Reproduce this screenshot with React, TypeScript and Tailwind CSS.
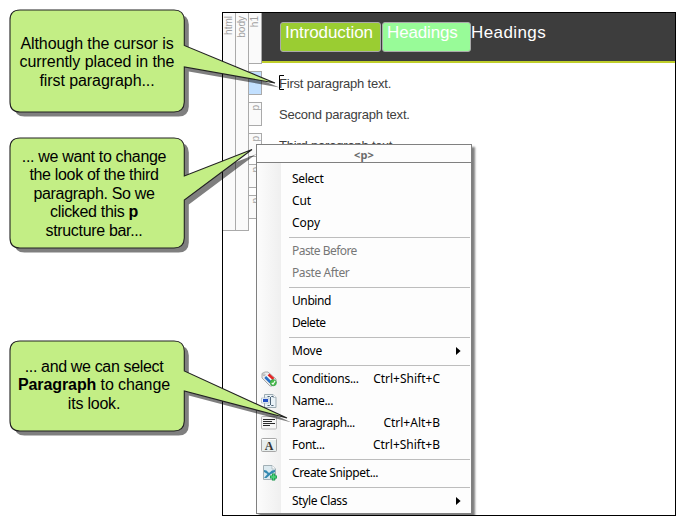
import type { ReactNode } from "react";

const ARIAL = "font-['Liberation_Sans',Arial,sans-serif]";
const MENU_FONT = "font-['Noto_Sans','Open_Sans',sans-serif]";

function Balloon({ path, children, box }: { path: string; box: string; children: ReactNode }) {
  return (
    <>
      <svg className="pointer-events-none absolute inset-0" width="676" height="516" viewBox="0 0 676 516">
        <path d={path} transform="translate(4.5 4.5)" fill="#000" fillOpacity="0.5" />
        <path d={path} fill="#c3ee85" stroke="#222" strokeWidth="1.1" strokeLinejoin="miter" />
      </svg>
      <div className={`absolute flex w-[174px] flex-col items-center text-[16px] leading-[18.4px] whitespace-nowrap text-black ${box} ${ARIAL}`}>
        {children}
      </div>
    </>
  );
}

function balloonPath(top: number, bottom: number, tailTop: number, tipX: number, tipY: number, tailBottom: number) {
  return `M20 ${top}H174Q184 ${top} 184.3 ${top + 10}V${tailTop}L${tipX} ${tipY}L184.3 ${tailBottom}V${bottom - 10}Q184 ${bottom} 174 ${bottom}H20Q10 ${bottom} 10 ${bottom - 10}V${top + 10}Q10 ${top} 20 ${top}Z`;
}

function Tag({ children, selected = false }: { children?: ReactNode; selected?: boolean }) {
  return (
    <div className={`mb-[7px] flex h-6 w-[13px] justify-center border-y border-r border-[#aaa] pt-[2px] ${selected ? "bg-[#c2e0ff]" : "bg-[#fafafa]"}`}>
      <span className="h-fit rotate-180 text-[10px] leading-[11px] text-[#a0a0a0] [writing-mode:vertical-rl]">{children}</span>
    </div>
  );
}

function Item({ label, cls = "", keys, icon, arrow, disabled }: {
  label: string; cls?: string; keys?: string; icon?: ReactNode; arrow?: boolean; disabled?: boolean;
}) {
  return (
    <div className={`flex h-[22px] items-center text-[12px] leading-[22px] whitespace-nowrap ${disabled ? "text-[#777]" : "text-black"}`}>
      <span className="flex w-[35px] shrink-0 pl-1">{icon}</span>
      <span className={cls}>{label}</span>
      {keys && <span className="mr-[31px] ml-auto">{keys}</span>}
      {arrow && (
        <svg className="mr-[10px] ml-auto" width="5" height="8" viewBox="0 0 5 8"><path d="M0 0L4.6 4L0 8Z" fill="#000" /></svg>
      )}
    </div>
  );
}

function Sep() {
  return <div className="flex h-[6px] items-center pr-px pl-8"><div className="h-px w-full bg-[#bdbdbd]" /></div>;
}

const conditionsIcon = (
  <svg width="17" height="16" viewBox="0 0 17 16">
    <path d="M1 2.5L4 1H7L15 8V12L11 15H9L1 7Z" fill="#ececec" stroke="#a0a0a0" strokeWidth=".9" />
    <path d="M7.5 3.5L12.5 8" stroke="#e52525" strokeWidth="2.6" />
    <path d="M4.2 6L9.5 11.2" stroke="#2870c4" strokeWidth="2.6" />
    <path d="M5.8 4.6L11 9.8" stroke="#fff" strokeWidth="1" />
    <circle cx="3" cy="3.8" r="1" fill="#fff" stroke="#888" strokeWidth=".6" />
    <circle cx="12.3" cy="11.7" r="3.1" fill="#4bbd4c" stroke="#24953a" strokeWidth=".6" />
    <path d="M10.8 12L12 13.2L14.2 9.8" stroke="#fff" fill="none" strokeWidth="1.1" />
  </svg>
);
const nameIcon = (
  <svg width="16" height="16" viewBox="0 0 16 16">
    <path d="M3.5 1.5H12L15 4.5V14.5H3.5Z" fill="#eaf2f7" stroke="#9cabb2" />
    <path d="M12 1.5V4.5H15" fill="#fff" stroke="#9cabb2" strokeWidth=".7" />
    <path d="M.5 5H8V10H.5Z" fill="#f7fbff" stroke="#a4b4c4" strokeWidth=".7" />
    <path d="M2 6H7V9H2Z" fill="#214fc4" />
    <path d="M6.5 3.5H8.5L9.5 4.5L10.5 3.5H12.5M9.5 4V12M6.5 12.5H8.5L9.5 11.5L10.5 12.5H12.5" stroke="#4c6378" fill="none" />
  </svg>
);
const paragraphIcon = (
  <svg width="16" height="14" viewBox="0 0 16 14">
    <rect x=".5" y=".5" width="15" height="12.5" rx="1" fill="#f5f5f5" stroke="#b7b7b7" />
    <path d="M2 3.5H14M2 5.5H11M2 7.5H14M2 9.5H9" stroke="#292929" />
  </svg>
);
const fontIcon = (
  <svg width="16" height="14" viewBox="0 0 16 14">
    <rect x=".5" y=".5" width="15" height="13" rx="1" fill="#e7eeed" stroke="#a7a7a7" />
    <path d="M1 1.5H15" stroke="#fff" />
    <text x="8" y="11.5" textAnchor="middle" fontSize="12" fontWeight="700" fill="#333" fontFamily="Liberation Serif, serif">A</text>
  </svg>
);
const snippetIcon = (
  <svg className="ml-0.5" width="15" height="16" viewBox="0 0 15 16">
    <path d="M.5 .5H9L12.5 4V14.5H.5Z" fill="#dceaf0" stroke="#a1afb5" />
    <path d="M9 .5V4H12.5" fill="#fff" stroke="#a1afb5" strokeWidth=".7" />
    <path d="M1 5L3.5 5.5L6 8L9 5.5L12 5V7L8 9L3.5 13H1L4.5 9L1 7Z" fill="#3489b1" />
    <path d="M10.5 8.5V15.5M7 12H14" stroke="#159447" strokeWidth="3.2" />
    <path d="M10.5 9.2V14.8M7.7 12H13.3" stroke="#50d67d" strokeWidth="1.6" />
  </svg>
);

export default function App() {
  return (
    <div className={`relative h-[516px] w-[676px] overflow-hidden bg-white pt-3 pl-[222px] ${ARIAL}`}>
      <div className="flex h-[504px] w-[454px] border border-black">
        <div className="flex h-[502px] items-start text-[10px] leading-[12px] text-[#a0a0a0]">
          <div className="flex h-[218px] w-[13px] justify-center border-r border-b border-[#aaa] bg-[#fafafa] pt-[3px]">
            <span className="h-fit rotate-180 [writing-mode:vertical-rl]">html</span>
          </div>
          <div className="flex h-[218px] w-[13px] justify-center border-r border-b border-[#aaa] bg-[#fafafa] pt-[3px]">
            <span className="h-fit rotate-180 [writing-mode:vertical-rl]">body</span>
          </div>
          <div className="w-[13px]">
            <div className="mb-[7px] flex h-[51px] justify-center border-r border-b border-[#aaa] bg-[#fafafa] pt-[3px]">
              <span className="h-fit rotate-180 [writing-mode:vertical-rl]">h1</span>
            </div>
            <Tag selected /><Tag>p</Tag><Tag>p</Tag><Tag>p</Tag><Tag>p</Tag>
          </div>
        </div>
        <div className="flex-1">
          <div className="flex h-[50px] items-start border-b-2 border-[#bfce2b] bg-[#3d3d3d] pt-[9px] pl-[18px] text-[17px] leading-[20px] text-white">
            <div className="mr-px h-[30px] w-[101px] rounded-[3px] border border-[#aaa] bg-[#9acd32] pl-1 tracking-[-0.08px]">Introduction</div>
            <div className="h-[30px] w-[89px] rounded-[3px] border border-[#aaa] bg-[#98fb98] pl-1 tracking-[-0.15px]">Headings</div>
            <div className="pt-px tracking-[0.4px]">Headings</div>
          </div>
          <div className="flex flex-col gap-[11px] pt-[11px] pl-[17px] text-[13px] leading-5 tracking-[-0.2px] text-[#404040]">
            <div>First paragraph text.</div>
            <div>Second paragraph text.</div>
            <div>Third paragraph text.</div>
          </div>
        </div>
      </div>

      <svg className="absolute top-[75px] left-[279px]" width="5" height="15" viewBox="0 0 5 15"><path d="M5 .5H.5V14.5H5" fill="none" stroke="#000" /></svg>

      <div className={`absolute top-[144px] left-[256px] h-[370px] w-[216px] border border-[#808080] bg-[#fdfdfd] shadow-[3px_3px_2px_0_rgba(0,0,0,0.5)] ${MENU_FONT}`}>
        <div className="h-[18px] border-b border-[#808080] text-center text-[11px] leading-[20px] font-bold tracking-[0.2px] text-[#6b6b6b]">&lt;p&gt;</div>
        <div className="h-[350px] bg-[linear-gradient(90deg,#fcfcfc_0,#efefef_24px,#fdfdfd_24px)] pt-[5px]">
          <Item label="Select" cls="tracking-[-0.3px]" />
          <Item label="Cut" cls="tracking-[-0.1px]" />
          <Item label="Copy" />
          <Sep />
          <Item label="Paste Before" cls="tracking-[-0.55px]" disabled />
          <Item label="Paste After" cls="tracking-[-0.4px]" disabled />
          <Sep />
          <Item label="Unbind" cls="tracking-[-0.4px]" />
          <Item label="Delete" cls="tracking-[-0.5px]" />
          <Sep />
          <Item label="Move" cls="tracking-[-0.2px]" arrow />
          <Sep />
          <Item label="Conditions..." cls="tracking-[-0.27px]" icon={conditionsIcon} keys="Ctrl+Shift+C" />
          <Item label="Name..." cls="tracking-[-0.35px]" icon={nameIcon} />
          <Item label="Paragraph..." cls="tracking-[-0.5px]" icon={paragraphIcon} keys="Ctrl+Alt+B" />
          <Item label="Font..." cls="tracking-[-0.3px]" icon={fontIcon} keys="Ctrl+Shift+B" />
          <Sep />
          <Item label="Create Snippet..." cls="tracking-[-0.38px]" icon={snippetIcon} />
          <Sep />
          <Item label="Style Class" cls="tracking-[-0.35px]" arrow />
        </div>
      </div>

      <Balloon path={balloonPath(10, 112, 45.5, 275, 83, 67)} box="left-[10px] top-[35px] tracking-[-0.07px]">
        <span>Although the cursor is</span><span>currently placed in the</span><span>first paragraph...</span>
      </Balloon>
      <Balloon path={balloonPath(138, 248, 176, 252, 149.5, 200)} box="left-[7px] top-[148px] tracking-[-0.33px]">
        <span>... we want to change</span><span>the look of the third</span><span>paragraph. So we</span><span>clicked this <b>p</b></span><span>structure bar...</span>
      </Balloon>
      <Balloon path={balloonPath(341, 431, 371, 287, 418, 391)} box="left-[7px] top-[358px] tracking-[-0.22px]">
        <span className="tracking-[-0.35px]">... and we can select</span><span className="tracking-[-0.1px]"><b>Paragraph</b> to change</span><span>its look.</span>
      </Balloon>
    </div>
  );
}
